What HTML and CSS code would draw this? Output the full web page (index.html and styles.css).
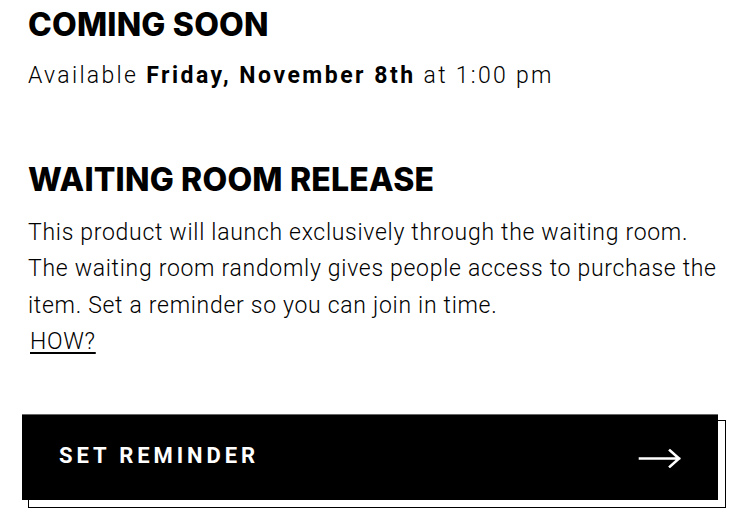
FILE: index.html
```html
<!DOCTYPE html>
<html lang="en">
<head>
<meta charset="utf-8">
<title>Coming Soon</title>
<link rel="stylesheet" href="styles.css">
</head>
<body>
<main class="page">
  <section class="block">
    <h2 class="title">COMING SOON</h2>
    <p class="avail">Available <strong>Friday, November 8th</strong> at 1:00 pm</p>
  </section>
  <section class="block block-wait">
    <h2 class="title">WAITING ROOM RELEASE</h2>
    <p class="desc">This product will launch exclusively through the waiting room. The waiting room randomly gives people access to purchase the item. Set a reminder so you can join in time.</p>
    <a class="how" href="#">HOW?</a>
  </section>
  <div class="btn-wrap">
    <button class="btn" type="button">
      <span class="btn-label">SET REMINDER</span>
      <svg class="btn-arrow" width="44" height="20" viewBox="0 0 44 20" aria-hidden="true">
        <path d="M2 10.5H41M32 2.5L41 10.5L32 18.5" fill="none" stroke="#fff" stroke-width="2.6" stroke-linecap="square" stroke-linejoin="miter"/>
      </svg>
    </button>
  </div>
</main>
</body>
</html>
```
FILE: styles.css
```css
* { box-sizing: border-box; }
html, body { margin: 0; padding: 0; background: #fff; }
body {
  font-family: Roboto, "Liberation Sans", sans-serif;
  color: #000;
}
.page {
  padding: 7px 18px 20px 22px;
}
.block {
  padding-left: 6px;
}
.title {
  margin: 0;
  font-family: Inter, "Liberation Sans", sans-serif;
  font-weight: 800;
  font-size: 32px;
  line-height: 36px;
  letter-spacing: 0.2px;
}
.avail {
  margin: 18px 0 0;
  font-size: 23px;
  font-weight: 300;
  line-height: 30px;
  letter-spacing: 2.3px;
}
.avail strong { font-weight: 700; letter-spacing: 2.5px; }
.block-wait { margin-top: 71px; }
.desc {
  margin: 16.5px 0 0;
  font-size: 23px;
  font-weight: 300;
  line-height: 36.5px;
  letter-spacing: 0.7px;
}
.how {
  display: inline-block;
  margin-left: 2px;
  color: #000;
  font-size: 23px;
  font-weight: 300;
  line-height: 36.5px;
  letter-spacing: 0.7px;
  text-decoration: underline;
  text-decoration-thickness: 2px;
  text-underline-offset: 3px;
}
.btn-wrap {
  position: relative;
  isolation: isolate;
  margin-top: 53.5px;
  width: 696px;
  height: 86px;
}
.btn-wrap::before {
  content: "";
  position: absolute;
  left: 6px;
  top: 6px;
  width: 100%;
  height: 100%;
  border: 1.5px solid #000;
  z-index: -1;
}
.btn {
  display: flex;
  align-items: center;
  justify-content: space-between;
  width: 100%;
  height: 86px;
  padding: 0 36px 4px 37px;
  background: #000;
  color: #fff;
  border: 0;
  border-top: 1px solid #666;
  font-family: Roboto, "Liberation Sans", sans-serif;
  font-weight: 700;
  font-size: 22px;
  letter-spacing: 3.9px;
  cursor: pointer;
}
.btn-label { line-height: 1; }
.btn-arrow { display: block; margin-top: 4px; }
```
